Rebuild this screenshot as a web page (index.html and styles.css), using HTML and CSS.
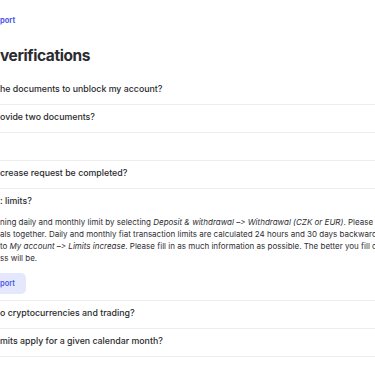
FILE: index.html
```html
<!DOCTYPE html>
<html lang="en">
<head>
<meta charset="utf-8">
<title>Limits and verifications</title>
<link rel="stylesheet" href="styles.css">
</head>
<body>
<main class="page">
  <a class="crumb" href="#">port</a>
  <h1 class="title">verifications</h1>
  <ul class="faq">
    <li class="item"><div class="q">he documents to unblock my account?</div></li>
    <li class="item"><div class="q">ovide two documents?</div></li>
    <li class="item"><div class="q">&nbsp;</div></li>
    <li class="item"><div class="q">crease request be completed?</div></li>
    <li class="item open">
      <div class="q">: limits?</div>
      <div class="answer">
        <span class="line">ning daily and monthly limit by selecting <em>Deposit &amp; withdrawal –&gt; Withdrawal (CZK or EUR)</em>. Please no</span>
        <span class="line">als together. Daily and monthly fiat transaction limits are calculated 24 hours and 30 days backward.</span>
        <span class="line">to <em>My account –&gt; Limits increase</em>. Please fill in as much information as possible. The better you fill out</span>
        <span class="line">ss will be.</span>
      </div>
      <a class="btn" href="#">port</a>
    </li>
    <li class="item"><div class="q">o cryptocurrencies and trading?</div></li>
    <li class="item"><div class="q">mits apply for a given calendar month?</div></li>
  </ul>
</main>
</body>
</html>
```
FILE: styles.css
```css
html, body {
  margin: 0;
  padding: 0;
  background: #ffffff;
  overflow: hidden;
}
body {
  font-family: Inter, "Noto Sans", sans-serif;
  font-feature-settings: "calt" 0;
  color: #2a2a2e;
}
.page {
  width: 375px;
  padding-top: 15px;
}
.crumb {
  display: block;
  font-size: 7.5px;
  line-height: 12px;
  font-weight: 700;
  color: #4f5ae4;
  text-decoration: none;
}
.title {
  margin: 17px 0 9px;
  font-size: 15.5px;
  line-height: 24px;
  font-weight: 700;
  letter-spacing: -0.4px;
  color: #2b2b30;
}
.faq {
  list-style: none;
  margin: 0;
  padding: 0;
}
.item {
  border-bottom: 1px solid #ededed;
}
.q {
  padding: 5px 0 8px;
  font-size: 8.8px;
  line-height: 14px;
  font-weight: 500;
  white-space: nowrap;
}
.answer {
  display: flex;
  flex-direction: column;
  width: 375px;
  overflow: hidden;
  font-size: 8px;
  line-height: 12px;
  color: #2e2e33;
}
.line {
  white-space: nowrap;
}
.btn {
  display: inline-block;
  margin: 9px 0 6px;
  padding: 0 11px 0 0;
  height: 21px;
  line-height: 21px;
  font-size: 7.5px;
  font-weight: 600;
  color: #4f5ae4;
  background: #e5e8fd;
  border-radius: 0 5px 5px 0;
  text-decoration: none;
  vertical-align: top;
}
```
